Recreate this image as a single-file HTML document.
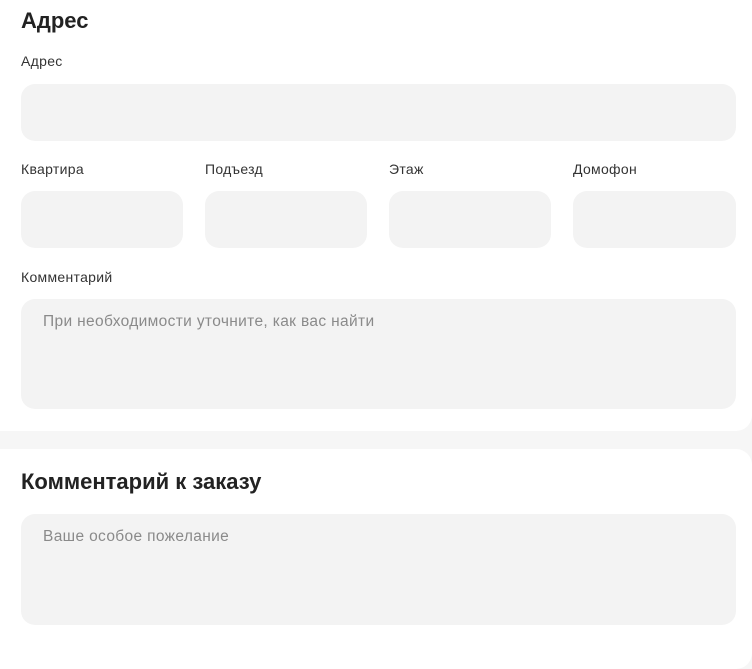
<!DOCTYPE html>
<html><head><meta charset="utf-8"><style>
*{margin:0;padding:0;box-sizing:border-box}
body{width:752px;height:638px;background:#f6f6f6;font-family:"Liberation Sans",Arial,sans-serif;color:#2a2a2a;position:relative;overflow:hidden}
.card{position:absolute;left:-20px;width:772px;background:#fff;border-radius:0 0 16px 16px}
.t{position:absolute;left:21px;font-weight:bold;font-size:22px;color:#222;letter-spacing:0}
.l{position:absolute;font-size:14px;color:#333;letter-spacing:0.3px}
.i{position:absolute;background:#f3f3f3;border-radius:14px}
.p{position:absolute;left:43px;font-size:15.5px;color:#8a8a8a;letter-spacing:0.35px}
</style></head><body>
<div class="card" style="top:-20px;height:451px"></div>
<div class="card" style="top:449px;height:220px;border-radius:16px"></div>
<div class="t" style="top:8px">Адрес</div>
<div class="l" style="left:21px;top:53px">Адрес</div>
<div class="i" style="left:21px;top:84px;width:715px;height:57px"></div>
<div class="l" style="left:21px;top:161px">Квартира</div>
<div class="l" style="left:205px;top:161px">Подъезд</div>
<div class="l" style="left:389px;top:161px">Этаж</div>
<div class="l" style="left:573px;top:161px">Домофон</div>
<div class="i" style="left:21px;top:191px;width:162px;height:57px"></div>
<div class="i" style="left:205px;top:191px;width:162px;height:57px"></div>
<div class="i" style="left:389px;top:191px;width:162px;height:57px"></div>
<div class="i" style="left:573px;top:191px;width:163px;height:57px"></div>
<div class="l" style="left:21px;top:269px">Комментарий</div>
<div class="i" style="left:21px;top:299px;width:715px;height:110px"></div>
<div class="p" style="top:313px">При необходимости уточните, как вас найти</div>
<div class="t" style="top:469px">Комментарий к заказу</div>
<div class="i" style="left:21px;top:514px;width:715px;height:111px"></div>
<div class="p" style="top:528px">Ваше особое пожелание</div>
</body></html>
